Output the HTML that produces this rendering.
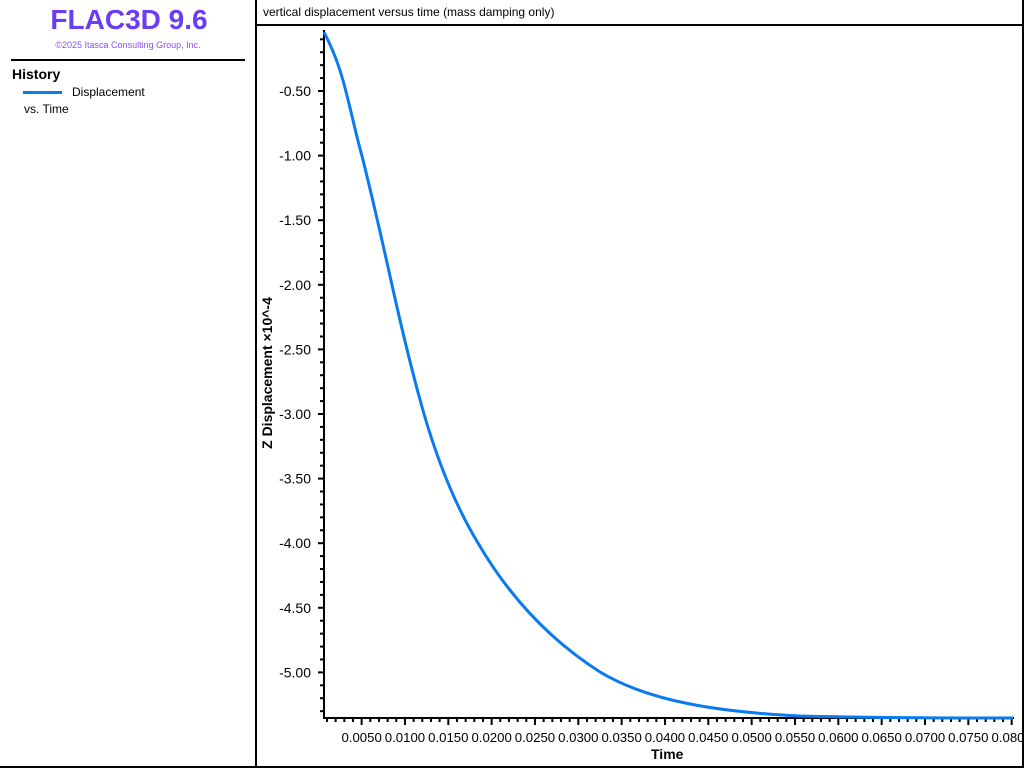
<!DOCTYPE html>
<html><head><meta charset="utf-8"><style>
body{margin:0;width:1024px;height:768px;background:#fff;overflow:hidden;font-family:"Liberation Sans",sans-serif;position:relative}
.a{position:absolute;white-space:nowrap}
</style></head><body>
<div class="a" style="left:0;top:0;width:1022px;height:766px;border-right:2px solid #000;border-bottom:2px solid #000"></div>
<div class="a" style="left:255px;top:0;width:2px;height:768px;background:#000"></div>
<div class="a" style="left:257px;top:24px;width:767px;height:2px;background:#000"></div>
<div class="a" style="left:0;top:4px;width:258px;text-align:center;font-size:28px;font-weight:bold;color:#6a3cf5">FLAC3D 9.6</div>
<div class="a" style="left:0;top:40px;width:256px;text-align:center;font-size:9px;color:#8a50e8">©2025 Itasca Consulting Group, Inc.</div>
<div class="a" style="left:11px;top:59px;width:234px;height:2px;background:#000"></div>
<div class="a" style="left:12px;top:66px;font-size:14px;font-weight:bold">History</div>
<div class="a" style="left:23px;top:91px;width:39px;height:3px;background:#0a7af0"></div>
<div class="a" style="left:72px;top:85px;font-size:12px">Displacement</div>
<div class="a" style="left:24px;top:102px;font-size:12px">vs. Time</div>
<div class="a" style="left:263px;top:5px;font-size:12px">vertical displacement versus time (mass damping only)</div>
<div class="a" style="top:373px;font-size:14px;font-weight:bold;transform:translate(-50%,-50%) rotate(-90deg);left:267px">Z Displacement ×10^-4</div>
<div class="a" style="left:651px;top:746px;font-size:14px;font-weight:bold">Time</div>
<svg class="a" style="left:0;top:0" width="1024" height="768">
<g stroke="#000" stroke-width="2" fill="none">
<line x1="324" y1="30" x2="324" y2="719"/>
<line x1="323" y1="718" x2="1014" y2="718"/>
</g>
<g id="ticks" stroke="#000" stroke-width="2"></g>
<g id="lbl" font-family="Liberation Sans" font-size="14" fill="#000"></g>
<path fill="none" stroke="#0a7af0" stroke-width="3" d="M324,32 C332,48 338,62 344,84 C351,110 356,135 362,156 C372,196 382,240 392,285 C402,330 412,372 424,414 C438,462 455,505 478,543 C510,598 550,640 600,672 C650,702 720,712 800,716 C880,718 950,718 1013,718"/>
</svg>
<script>
var t=document.getElementById('ticks'),l=document.getElementById('lbl'),s='',h='';
for(var i=0;;i++){var y=26.4+i*12.92;if(y>716)break;if(y<30)continue;var maj=i%5==0;s+='<line x1="'+(maj?318:320)+'" y1="'+y+'" x2="324" y2="'+y+'"/>';if(maj)h+='<text x="311" y="'+(y+5)+'" text-anchor="end">-'+(i/10).toFixed(2)+'</text>';}
for(var i=1;i<=80;i++){var x=318.3+i*8.667;if(x<325)continue;var maj=i%5==0;s+='<line x1="'+x+'" y1="718" x2="'+x+'" y2="'+(maj?725:722)+'"/>';if(maj)h+='<text x="'+x+'" y="742" text-anchor="middle" font-size="13.2">'+(i*0.001).toFixed(4)+'</text>';}
t.innerHTML=s;l.innerHTML=h;
</script>
</body></html>
